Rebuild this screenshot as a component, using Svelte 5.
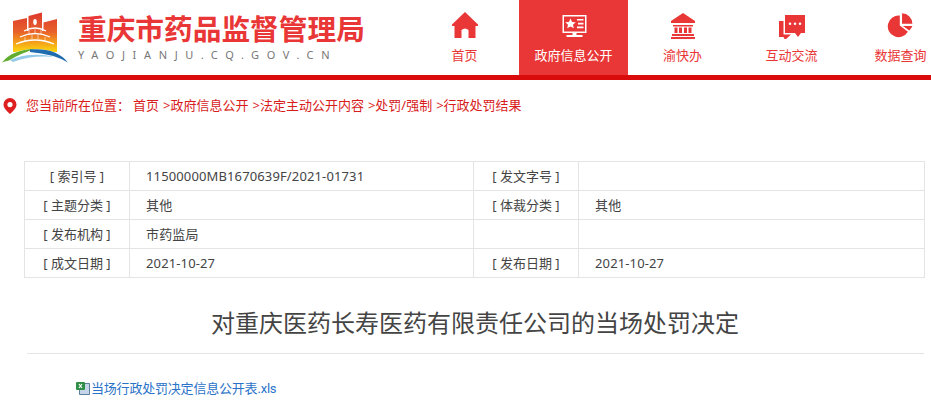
<script lang="ts">
	const nav = [
		{ label: '首页', icon: 'home' },
		{ label: '政府信息公开', icon: 'screen', active: true },
		{ label: '渝快办', icon: 'bank' },
		{ label: '互动交流', icon: 'chat' },
		{ label: '数据查询', icon: 'pie' }
	];
	const crumbs = ['首页', '政府信息公开', '法定主动公开内容', '处罚/强制', '行政处罚结果'];
	const rows = [
		['索引号', '11500000MB1670639F/2021-01731', '发文字号', ''],
		['主题分类', '其他', '体裁分类', '其他'],
		['发布机构', '市药监局', '', ''],
		['成文日期', '2021-10-27', '发布日期', '2021-10-27']
	];
</script>

<div class="page">
	<header class="top">
		<div class="brand">
			<svg class="logo" viewBox="0 0 70 60" width="70" height="60">
				<defs>
					<linearGradient id="warm" gradientUnits="userSpaceOnUse" x1="0" y1="6" x2="0" y2="44">
						<stop offset="0" stop-color="#dd3a2c" />
						<stop offset="0.5" stop-color="#e8622a" />
						<stop offset="0.75" stop-color="#f39a1c" />
						<stop offset="1" stop-color="#fcd20e" />
					</linearGradient>
				</defs>
				<path fill="url(#warm)" d="M13 14 L27 11 V45 H13 Z M28.5 9 L42 5.5 V45 H28.5 Z M43.5 15.5 L57 12 V45 H43.5 Z" />
				<ellipse cx="35" cy="15" rx="1.8" ry="3" fill="#fff" />
				<path fill="url(#warm)" d="M20 24 H50 V45 H20 Z" />
				<path fill="none" stroke="#fff" stroke-width="1.3" d="M24 24 Q35 18 46 24 M20 30 Q35 23 50 30 M16 37 Q35 29 54 37" />
				<path fill="none" stroke="#fff" stroke-opacity=".55" stroke-width="1" d="M29 23 V27 M35 22 V26 M41 23 V27 M25 30 V34 M32 28 V32 M38 28 V32 M45 30 V34" />
				<path fill="#fff" d="M0 60 V54 Q14 42 35 42 Q56 42 70 54 V60 Z" />
				<path fill="#62ad2f" d="M2 55.5 Q12 42.5 35 42 Q20 46.5 9 53.5 Q4 54.5 2 55.5 Z" />
				<path fill="#1f6cae" d="M30 42.5 Q56 40.5 68 55.5 Q54 47 30 45 Z" />
				<path fill="#93cbe8" d="M10 53 Q30 44.5 55 50 Q32 48 13 55 Z" />
			</svg>
			<div class="names">
				<div class="cn">重庆市药品监督管理局</div>
				<div class="en">YAOJIANJU.CQ.GOV.CN</div>
			</div>
		</div>
		<nav class="nav">
			{#each nav as item}
				<a class="item" class:active={item.active} href="#top">
					<svg viewBox="0 0 28 28" width="28" height="28" fill="currentColor">
						{#if item.icon === 'home'}
							<path d="M14 1 L27 13.5 V15 H24.5 V27 H17.5 V19 Q14 16 10.5 19 V27 H3.5 V15 H1 V13.5 Z" />
						{:else if item.icon === 'screen'}
							<g transform="translate(0.5 2)">
								<path fill-rule="evenodd" d="M2 2 H26 V20 H16 V22 H22 V24 H6 V22 H12 V20 H2 Z M3.5 3.5 V18.5 H24.5 V3.5 Z" />
								<path d="M10 5.5 L11.6 9 L15.2 9.3 L12.5 11.7 L13.3 15.3 L10 13.4 L6.7 15.3 L7.5 11.7 L4.8 9.3 L8.4 9 Z M16.5 6 H23 V7.6 H16.5 Z M17.5 9.8 H23 V11.4 H17.5 Z M16.5 13.6 H23 V15.2 H16.5 Z" />
							</g>
						{:else if item.icon === 'bank'}
							<path d="M14 2 L26 10 V12 H2 V10 Z M4 14 H24 V15.5 H4 Z M5.5 16.5 H8.5 V22 H5.5 Z M10 16.5 H13 V22 H10 Z M15 16.5 H18 V22 H15 Z M19.5 16.5 H22.5 V22 H19.5 Z M3 23 H25 V25 H3 Z M2 26 H26 V28 H2 Z" />
						{:else if item.icon === 'chat'}
							<g transform="translate(-1 2)">
								<path fill-rule="evenodd" d="M8 2 H28 V20 H24 L21 24 L18 20 H8 Z M13 9.5 A1.3 1.3 0 1 0 13 12.1 A1.3 1.3 0 1 0 13 9.5 Z M18 9.5 A1.3 1.3 0 1 0 18 12.1 A1.3 1.3 0 1 0 18 9.5 Z M23 9.5 A1.3 1.3 0 1 0 23 12.1 A1.3 1.3 0 1 0 23 9.5 Z" />
								<path d="M2 8 H6.5 V21.5 H14 L8 27 L6.5 24 H2 Z" />
							</g>
						{:else}
							<g transform="translate(2 1) scale(0.9)">
								<path d="M12 4 V15 L21 22 A12 12 0 1 1 12 4 Z M14.5 1.5 A11.5 11.5 0 0 1 26 13 H14.5 Z M15.5 15.5 H26 A12 12 0 0 1 22.5 20.5 Z" />
							</g>
						{/if}
					</svg>
					<span>{item.label}</span>
				</a>
			{/each}
		</nav>
	</header>

	<div class="crumbs">
		<svg viewBox="0 0 14 16" width="14" height="16">
			<path fill="#dd1f1f" fill-rule="evenodd" d="M7 0 A6.5 6.5 0 0 1 13.5 6.5 C13.5 10.5 9 14 7 16 C5 14 .5 10.5 .5 6.5 A6.5 6.5 0 0 1 7 0 Z M7 4 A2.6 2.6 0 1 0 7 9.2 A2.6 2.6 0 1 0 7 4 Z" />
		</svg>
		<span class="here">您当前所在位置：</span>
		{#each crumbs as crumb, i}
			<span class="crumb">{i > 0 ? '>' : ''}{crumb}</span>
		{/each}
	</div>

	<table class="meta">
		<colgroup>
			<col class="c-label" />
			<col class="c-wide" />
			<col class="c-label" />
			<col />
		</colgroup>
		<tbody>
			{#each rows as row}
				<tr>
					<th>{row[0] ? `[ ${row[0]} ]` : ''}</th>
					<td>{row[1]}</td>
					<th>{row[2] ? `[ ${row[2]} ]` : ''}</th>
					<td>{row[3]}</td>
				</tr>
			{/each}
		</tbody>
	</table>

	<h1 class="title">对重庆医药长寿医药有限责任公司的当场处罚决定</h1>

	<div class="attach">
		<svg viewBox="0 0 14 14" width="14" height="14">
			<path fill="#c6d6ea" stroke="#5f7f9f" d="M3.5 2.5 H13.5 V13.5 H3.5 Z" />
			<rect x="0" y="1" width="9" height="8" rx="1" fill="#2f8f46" />
			<path stroke="#fff" stroke-width="1.2" d="M3 3 L6 7 M6 3 L3 7" />
		</svg>
		<a href="#top">当场行政处罚决定信息公开表.xls</a>
	</div>
</div>

<style>
	:global(body) {
		margin: 0;
		background: #fff;
		overflow: hidden;
	}

	.page {
		width: 931px;
		height: 403px;
		overflow: hidden;
		font-family: 'Noto Sans', 'Noto Sans CJK SC', sans-serif;
		font-size: 13px;
		color: #444;
	}

	.top {
		display: flex;
		height: 75px;
		border-bottom: 5px solid #d90b0b;
	}

	.brand {
		display: flex;
		width: 410px;
		flex: none;
		padding-top: 7px;
		box-sizing: border-box;
	}

	.logo {
		flex: none;
		margin-right: 8px;
	}

	.cn {
		margin-top: 4px;
		font-size: 28.7px;
		line-height: 36px;
		font-weight: 700;
		color: #e93636;
		white-space: nowrap;
	}

	.en {
		margin-top: 1px;
		font-size: 11px;
		line-height: 14px;
		letter-spacing: 7.65px;
		color: #777;
		white-space: nowrap;
	}

	.nav {
		display: flex;
		flex: none;
	}

	.item {
		width: 109px;
		height: 75px;
		flex: none;
		display: flex;
		flex-direction: column;
		align-items: center;
		padding-top: 11px;
		box-sizing: border-box;
		color: #e93636;
		text-decoration: none;
	}

	.item span {
		margin-top: 7px;
		line-height: 18px;
		white-space: nowrap;
	}

	.item.active {
		background: #e93636;
		color: #fff;
	}

	.crumbs {
		display: flex;
		align-items: center;
		height: 20px;
		margin-top: 14px;
		padding-left: 3px;
		color: #d91c1c;
		white-space: nowrap;
	}

	.crumbs svg {
		margin-top: 3px;
	}

	.here {
		margin: 0 3px 0 9px;
	}

	.crumb {
		margin-right: 4px;
	}

	.meta {
		width: 901px;
		margin: 47px 0 0 24px;
		border-collapse: collapse;
		table-layout: fixed;
	}

	.c-label {
		width: 105px;
	}

	.c-wide {
		width: 344px;
	}

	.meta th,
	.meta td {
		height: 29px;
		padding: 0 0 1px;
		box-sizing: border-box;
		border: 1px solid #e4e4e4;
		font-size: 13px;
		font-weight: 400;
		color: #444;
	}

	.meta td {
		padding-left: 16px;
		letter-spacing: 0.13px;
	}

	.title {
		margin: 27px 7px 0 27px;
		padding: 0 1px 12px 0;
		font-size: 24px;
		line-height: 36px;
		font-weight: 400;
		text-align: center;
		color: #444;
		border-bottom: 1px solid #e4e4e4;
	}

	.attach {
		display: flex;
		align-items: center;
		margin: 24px 0 0 76px;
	}

	.attach svg {
		flex: none;
		margin-right: 1px;
	}

	.attach a {
		font-family: Roboto, 'Noto Sans CJK SC', sans-serif;
		letter-spacing: -0.2px;
		color: #2b73c9;
		text-decoration: none;
	}
</style>
